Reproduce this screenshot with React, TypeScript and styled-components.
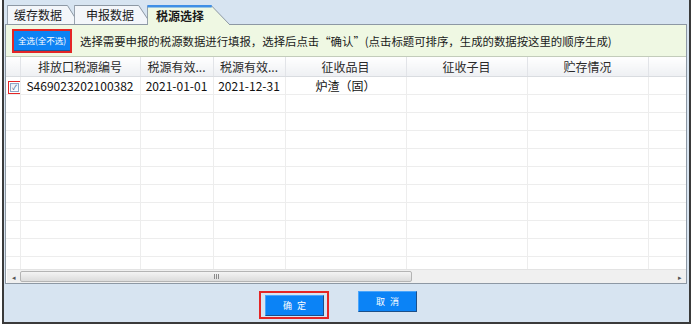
import styled, { createGlobalStyle, css } from 'styled-components'

const GlobalStyle = createGlobalStyle`
  html, body { margin: 0; padding: 0; background: #ffffff; }
  body { font-family: "Noto Sans CJK SC", "Noto Sans", sans-serif; }
`

const columns = [
  { title: '', width: 14 },
  { title: '排放口税源编号', width: 120 },
  { title: '税源有效...', width: 73 },
  { title: '税源有效...', width: 72 },
  { title: '征收品目', width: 121 },
  { title: '征收子目', width: 121 },
  { title: '贮存情况', width: 121 },
  { title: '', width: 38 },
]

const rows = [
  { checked: true, cells: ['S469023202100382', '2021-01-01', '2021-12-31', '炉渣（固）', '', '', ''] },
]
const EMPTY_ROWS = 10

export default function App() {
  return (
    <>
      <GlobalStyle />
      <Window>
        <TabBar>
          <Tab $width={72}>
            <TabShape />
            <TabLabel>缓存数据</TabLabel>
          </Tab>
          <Tab $width={77} $offset={-5}>
            <TabShape />
            <TabLabel $pad={12}>申报数据</TabLabel>
          </Tab>
          <Tab $width={83} $offset={-4} $active>
            <TabShape active />
            <TabLabel $pad={9} $bold>税源选择</TabLabel>
          </Tab>
        </TabBar>

        <Panel>
          <Toolbar>
            <RedFrame $tight>
              <SelectAll>全选(全不选)</SelectAll>
            </RedFrame>
            <Hint>选择需要申报的税源数据进行填报，选择后点击“确认”(点击标题可排序，生成的数据按这里的顺序生成)</Hint>
          </Toolbar>

          <GridBox>
            <GridScroll>
              <Table>
                <colgroup>
                  {columns.map((c, i) => (
                    <col key={i} style={{ width: c.width }} />
                  ))}
                </colgroup>
                <thead>
                  <tr>
                    {columns.map((c, i) => (
                      <HeadCell key={i}>{c.title}</HeadCell>
                    ))}
                  </tr>
                </thead>
                <tbody>
                  {rows.map((r, i) => (
                    <tr key={i}>
                      <Cell>
                        <CheckHighlight>
                          <CheckBox>✓</CheckBox>
                        </CheckHighlight>
                      </Cell>
                      {r.cells.map((v, j) => (
                        <Cell key={j}>{v}</Cell>
                      ))}
                      <Cell />
                    </tr>
                  ))}
                  {Array.from({ length: EMPTY_ROWS }).map((_, i) => (
                    <tr key={'e' + i}>
                      {columns.map((_c, j) => (
                        <Cell key={j} />
                      ))}
                    </tr>
                  ))}
                </tbody>
              </Table>
            </GridScroll>
            <ScrollBar>
              <ScrollArrow>◂</ScrollArrow>
              <Track>
                <Thumb>
                  <Grip />
                </Thumb>
              </Track>
              <ScrollArrow>▸</ScrollArrow>
            </ScrollBar>
          </GridBox>
        </Panel>

        <Footer>
          <RedFrame>
            <ActionButton>确定</ActionButton>
          </RedFrame>
          <ActionButton>取消</ActionButton>
        </Footer>
      </Window>
    </>
  )
}

function TabShape({ active = false }: { active?: boolean }) {
  return (
    <ShapeSvg preserveAspectRatio="none" viewBox="0 0 100 19" aria-hidden="true">
      <path
        d={active ? 'M0.5 19 L0.5 1 L78 1 L100 19' : 'M0.5 19 L0.5 0.5 L84 0.5 L100 19'}
        fill={active ? '#eff8e3' : '#f3f6fa'}
        stroke="#8d98a4"
        strokeWidth="1"
        vectorEffect="non-scaling-stroke"
      />
      {active && (
        <path d="M0.5 1 L78 1" stroke="#3f8fe6" strokeWidth="3" vectorEffect="non-scaling-stroke" />
      )}
    </ShapeSvg>
  )
}

/*___Styling___*/

const Window = styled.div`
  margin-left: 2px;
  width: 689px;
  height: 324px;
  box-sizing: border-box;
  background: #d7e4f1;
  border: 2px solid #3a3a3a;
  border-top: none;
  padding: 5px 2px 0 1px;
  display: flex;
  flex-direction: column;
`

const TabBar = styled.div`
  display: flex;
  align-items: flex-end;
  height: 19px;
  padding-left: 2px;
  position: relative;
  z-index: 1;
`

const Tab = styled.div<{ $width: number; $offset?: number; $active?: boolean }>`
  position: relative;
  width: ${p => p.$width}px;
  height: 19px;
  margin-left: ${p => p.$offset ?? 0}px;
  display: flex;
  align-items: center;
  ${p => p.$active && css`
    height: 20px;
    margin-bottom: -1px;
    z-index: 2;
  `}
`

const ShapeSvg = styled.svg`
  position: absolute;
  inset: 0;
  width: 100%;
  height: 100%;
`

const TabLabel = styled.span<{ $pad?: number; $bold?: boolean }>`
  position: relative;
  padding-left: ${p => p.$pad ?? 7}px;
  font-size: 12px;
  line-height: 19px;
  color: #1a1a1a;
  font-weight: ${p => (p.$bold ? 700 : 400)};
  white-space: nowrap;
`

const Panel = styled.div`
  height: 260px;
  box-sizing: border-box;
  border: 1px solid #8d98a4;
  background: #eff8e3;
  display: flex;
  flex-direction: column;
`

const Toolbar = styled.div`
  height: 31px;
  flex-shrink: 0;
  display: flex;
  align-items: center;
  padding-left: 6px;
  gap: 8px;
  border-bottom: 1px solid #c3ccbb;
`

const RedFrame = styled.span<{ $tight?: boolean }>`
  display: inline-flex;
  border: 2px solid #e42626;
  padding: ${p => (p.$tight ? '0' : '2px 3px 1px 4px')};
`

const SelectAll = styled.span`
  display: flex;
  align-items: center;
  justify-content: center;
  width: 56px;
  height: 19px;
  background: #0d82f3;
  border-bottom: 1px solid #1a5a9e;
  color: #ffffff;
  font-size: 8.5px;
  white-space: nowrap;
`

const Hint = styled.span`
  font-size: 11.4px;
  color: #1a1a1a;
  white-space: nowrap;
`

const GridBox = styled.div`
  flex: 1;
  display: flex;
  flex-direction: column;
  background: #ffffff;
  overflow: hidden;
`

const GridScroll = styled.div`
  flex: 1;
  overflow: hidden;
`

const Table = styled.table`
  width: 680px;
  table-layout: fixed;
  border-collapse: collapse;
  font-size: 12px;
`

const HeadCell = styled.th`
  height: 19px;
  padding: 0 2px;
  font-weight: 400;
  color: #2a2a2a;
  text-align: center;
  white-space: nowrap;
  overflow: hidden;
  background: linear-gradient(#ffffff, #eef0f3);
  border-right: 1px solid #e2e4e8;
  border-bottom: 1px solid #d9dce0;
`

const Cell = styled.td`
  height: 17px;
  padding: 0 2px;
  color: #111111;
  text-align: center;
  white-space: nowrap;
  overflow: hidden;
  border-right: 1px solid #ededed;
  border-bottom: 1px solid #ededed;
`

const CheckHighlight = styled.span`
  display: inline-flex;
  border: 1px solid #e42626;
  padding: 1px;
  vertical-align: middle;
`

const CheckBox = styled.span`
  display: flex;
  align-items: center;
  justify-content: center;
  width: 7px;
  height: 7px;
  border: 1px solid #8fa6c4;
  background: linear-gradient(#e6eef8, #ffffff);
  color: #3a5a8a;
  font-size: 7px;
  line-height: 1;
`

const ScrollBar = styled.div`
  height: 13px;
  flex-shrink: 0;
  display: flex;
  align-items: stretch;
  background: #f0f0f0;
  border-top: 1px solid #e3e3e3;
  margin-left: 1px;
`

const ScrollArrow = styled.span`
  width: 13px;
  display: flex;
  align-items: center;
  justify-content: center;
  font-size: 7px;
  color: #555555;
`

const Track = styled.div`
  flex: 1;
  display: flex;
  align-items: center;
`

const Thumb = styled.div`
  width: 392px;
  height: 11px;
  box-sizing: border-box;
  border: 1px solid #b4b4b4;
  border-radius: 2px;
  background: linear-gradient(#f4f4f4, #dcdcdc);
  display: flex;
  align-items: center;
  justify-content: center;
`

const Grip = styled.span`
  width: 5px;
  height: 5px;
  background: repeating-linear-gradient(90deg, #8a8a8a 0 1px, transparent 1px 2px);
`

const Footer = styled.div`
  flex: 1;
  display: flex;
  align-items: flex-start;
  justify-content: center;
  gap: 29px;
  padding: 7px 16px 0 0;
`

const ActionButton = styled.button`
  width: 59px;
  height: 21px;
  box-sizing: border-box;
  padding: 0 0 0 5px;
  background: #0b83f6;
  border: 1px solid #1c4f88;
  border-top-color: #4aa5fb;
  border-left-color: #4aa5fb;
  color: #ffffff;
  font-family: "Noto Sans CJK SC", sans-serif;
  font-size: 9px;
  letter-spacing: 5px;
  cursor: pointer;
`
